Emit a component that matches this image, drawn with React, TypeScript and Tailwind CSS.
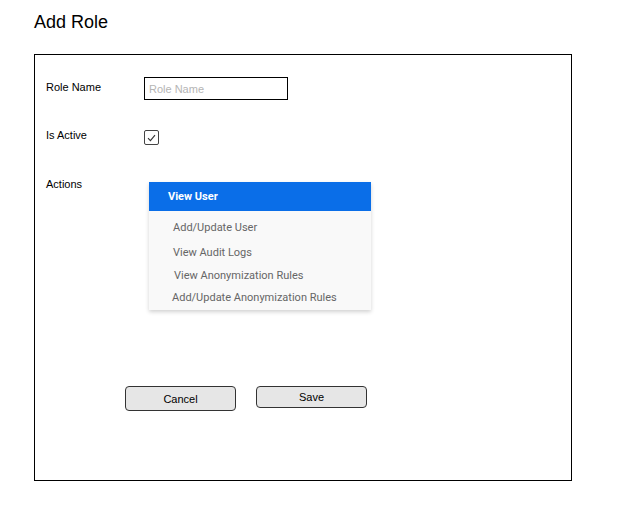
import { useState } from 'react';

const actions = [
  { label: 'Add/Update User', cls: 'mt-[10px] pl-[24px]' },
  { label: 'View Audit Logs', cls: 'mt-[11px] pl-[24px]' },
  { label: 'View Anonymization Rules', cls: 'mt-[9px] pl-[25px]' },
  { label: 'Add/Update Anonymization Rules', cls: 'mt-[8px] pl-[23px]' },
];

function App() {
  const [active, setActive] = useState(true);

  return (
    <div className="min-h-screen bg-white pl-[34px] font-['Liberation_Sans',Arial,sans-serif] text-black">
      {/* Title */}
      <h1 className="pt-[12px] text-[18px] leading-[21px]">Add Role</h1>

      {/* Form panel */}
      <div className="mt-[21px] box-border h-[427px] w-[538px] border border-black pl-[11px] pt-[22px]">
        {/* Role name */}
        <div className="flex items-start">
          <label className="mt-[4px] w-[98px] text-[11px] leading-[13px]">Role Name</label>
          <input
            placeholder="Role Name"
            className="box-border h-[23px] w-[144px] border border-black px-[4px] font-['Liberation_Sans',Arial,sans-serif] text-[11px] outline-none placeholder:text-[#b5b5b5]"
          />
        </div>

        {/* Is active */}
        <div className="mt-[29px] flex items-start">
          <label className="w-[98px] text-[11px] leading-[13px]">Is Active</label>
          <button
            onClick={() => setActive(!active)}
            className="mt-[1px] flex h-[15px] w-[15px] items-center justify-center rounded-[2px] border border-[#444]"
          >
            {active && (
              <svg width="9" height="8" viewBox="0 0 9 8" fill="none">
                <path d="M1 4.2L3.4 6.6L8 1.2" stroke="#333" strokeWidth="1.1" />
              </svg>
            )}
          </button>
        </div>

        {/* Actions */}
        <div className="mt-[33px] flex items-start">
          <label className="w-[98px] text-[11px] leading-[13px]">Actions</label>
          <div className="ml-[5px] mt-[4px] w-[222px] bg-[#f9f9f9] pb-[5px] font-['Roboto',sans-serif] shadow-[0_2px_4px_rgba(0,0,0,0.18)]">
            <div className="flex h-[29px] items-center bg-[#0a6ee8] pl-[19px] pt-[2px] text-[11px] font-bold text-white">
              View User
            </div>
            {actions.map((a) => (
              <div key={a.label} className={`${a.cls} text-[11px] leading-[14px] text-[#666]`}>
                {a.label}
              </div>
            ))}
          </div>
        </div>

        {/* Buttons */}
        <div className="ml-[79px] mt-[76px] flex items-start gap-[20px]">
          <button className="box-border h-[25px] w-[111px] rounded-[4px] border border-[#333] bg-[#e6e6e6] pt-[1px] text-[11px]">
            Cancel
          </button>
          <button className="box-border h-[22px] w-[111px] rounded-[4px] border border-[#333] bg-[#e6e6e6] text-[11px]">
            Save
          </button>
        </div>
      </div>
    </div>
  );
}

export default App;
